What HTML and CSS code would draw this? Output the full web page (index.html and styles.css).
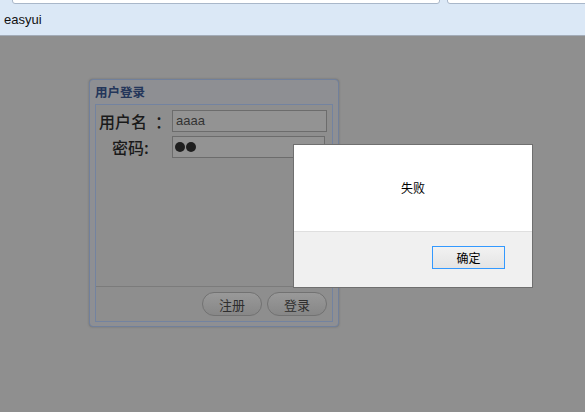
FILE: index.html
```html
<!DOCTYPE html>
<html lang="zh-CN">
<head>
    <meta charset="UTF-8">
    <title>easyui</title>
    <link rel="stylesheet" href="styles.css">
</head>
<body>
    <div class="topbar">
        <div class="address left-bar"></div>
        <div class="address right-bar"></div>
        <div class="tab-title">easyui</div>
    </div>

    <div class="stage">
        <div class="panel">
            <div class="panel-header">用户登录</div>
            <div class="panel-body">
                <div class="login-form">
                    <div class="label first">用户名<span class="colon">：</span></div>
                    <div class="input">aaaa</div>
                    <div class="label second">密码:</div>
                    <div class="input pwd"><span class="dot"></span><span class="dot"></span></div>
                </div>
                <div class="panel-footer">
                    <button class="pill">注册</button>
                    <button class="pill">登录</button>
                </div>
            </div>
        </div>

        <div class="dialog">
            <div class="dialog-body">失败</div>
            <div class="dialog-footer">
                <button class="ok">确定</button>
            </div>
        </div>
    </div>
</body>
</html>
```

FILE: styles.css
```css
* {
    box-sizing: border-box;
    margin: 0;
    padding: 0;
}

body {
    font-family: "Noto Sans CJK SC", "Liberation Sans", sans-serif;
    width: 585px;
    height: 412px;
    overflow: hidden;
    background: #8f8f8f;
}

.topbar {
    position: relative;
    height: 36px;
    background: #dbe8f6;
    border-bottom: 1px solid #a3acb8;
}

.address {
    position: absolute;
    top: -6px;
    height: 10px;
    background: #fff;
    border: 1px solid #a9b7c9;
    border-radius: 0 0 3px 3px;
}

.left-bar {
    left: 12px;
    width: 428px;
}

.right-bar {
    left: 447px;
    width: 150px;
}

.tab-title {
    position: absolute;
    left: 4px;
    top: 12px;
    font-family: "Liberation Sans", Arial, sans-serif;
    font-size: 13px;
    color: #111;
}

.stage {
    position: relative;
    height: 376px;
    padding: 43px 0 0 89px;
    background: #8f8f8f;
}

.panel {
    width: 250px;
    height: 248px;
    border: 1px solid #71809b;
    border-radius: 4px;
    padding: 0 5px 5px;
    background: #8e8f93;
    box-shadow: 0 0 2px rgba(70, 70, 70, 0.5);
}

.panel-header {
    height: 24px;
    line-height: 24px;
    font-size: 12.5px;
    font-weight: bold;
    color: #24365a;
}

.panel-body {
    height: 218px;
    border: 1px solid #7383a0;
    background: #8e8e8e;
    display: flex;
    flex-direction: column;
}

.login-form {
    display: grid;
    grid-template-columns: 76px 155px;
    row-gap: 4px;
    margin-top: 5px;
    align-items: center;
}

.label {
    font-size: 16px;
    font-weight: 500;
    color: #1a1a1a;
    line-height: 20px;
    white-space: nowrap;
}

.label.first {
    padding-left: 3px;
}

.label.first .colon {
    margin-left: 8px;
}

.label.second {
    padding-left: 16px;
}

.input {
    width: 155px;
    height: 22px;
    border: 1px solid #6c6c6c;
    background: #939393;
    font-family: "Liberation Sans", Arial, sans-serif;
    font-size: 13px;
    color: #333;
    padding: 2px 3px;
    line-height: 16px;
}

.input.pwd {
    width: 153px;
    display: flex;
    align-items: center;
    gap: 1px;
    padding: 0 2px;
}

.dot {
    width: 10px;
    height: 10px;
    border-radius: 50%;
    background: #1e1e1e;
}

.panel-footer {
    margin-top: auto;
    height: 35px;
    border-top: 1px solid #7b7b7b;
    display: flex;
    justify-content: flex-end;
    align-items: center;
    gap: 5px;
    padding: 0 5px 0 0;
}

.pill {
    width: 60px;
    height: 24px;
    border: 1px solid #727272;
    border-radius: 12px;
    background: linear-gradient(#999999, #878787);
    font-family: "Noto Sans CJK SC", sans-serif;
    font-size: 13px;
    color: #2e2e2e;
}

.dialog {
    position: absolute;
    left: 293px;
    top: 108px;
    width: 240px;
    height: 144px;
    border: 1px solid #6f6f6f;
    background: #f0f0f0;
    display: flex;
    flex-direction: column;
}

.dialog-body {
    height: 87px;
    background: #fff;
    border-bottom: 1px solid #dfdfdf;
    text-align: center;
    font-size: 12px;
    color: #000;
    padding: 34px 0 0 0;
}

.dialog-footer {
    flex: 1;
    display: flex;
    justify-content: flex-end;
    align-items: flex-start;
    padding: 14px 27px 0 0;
}

.ok {
    width: 73px;
    height: 23px;
    border: 1px solid #3399ff;
    background: linear-gradient(#f2f2f2, #e4e4e4);
    font-family: "Noto Sans CJK SC", sans-serif;
    font-size: 12px;
    color: #000;
}
```
